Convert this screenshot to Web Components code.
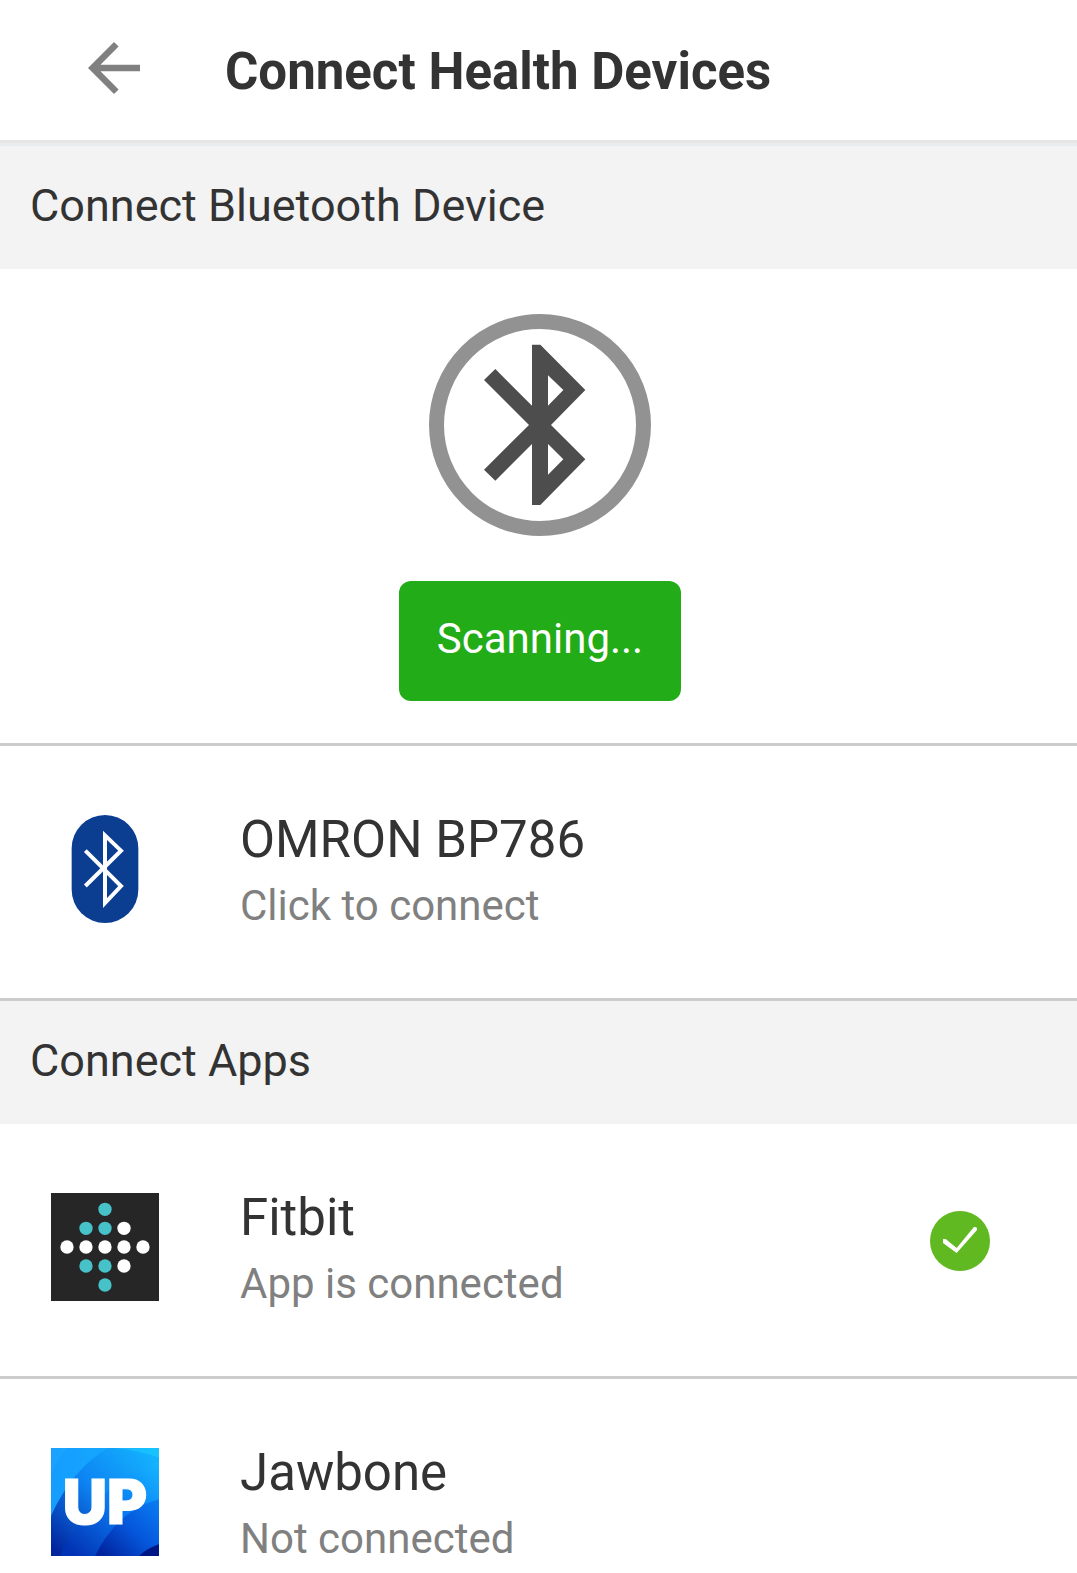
<!DOCTYPE html>
<html lang="en">
<head>
<meta charset="utf-8">
<meta name="viewport" content="width=device-width, initial-scale=1">
<title>Connect Health Devices</title>
<style>
body { margin: 0; background: #fff; color: #333; font-family: Roboto, "Noto Sans", sans-serif; }
</style>
</head>
<body>
<health-app>
  <app-header slot="header">Connect Health Devices</app-header>
  <section-heading>Connect Bluetooth Device</section-heading>
  <scan-panel>Scanning...</scan-panel>
  <device-row>
    <app-logo slot="icon" name="bluetooth"></app-logo>
    <span slot="title">OMRON BP786</span>
    <span slot="status">Click to connect</span>
  </device-row>
  <section-heading>Connect Apps</section-heading>
  <device-row>
    <app-logo slot="icon" name="fitbit"></app-logo>
    <span slot="title">Fitbit</span>
    <span slot="status">App is connected</span>
    <check-badge slot="badge"></check-badge>
  </device-row>
  <device-row>
    <app-logo slot="icon" name="up"></app-logo>
    <span slot="title">Jawbone</span>
    <span slot="status">Not connected</span>
  </device-row>
</health-app>
<script>
const define = (name, render) => customElements.define(name, class extends HTMLElement {
  connectedCallback() {
    if (!this.shadowRoot) this.attachShadow({ mode: 'open' }).innerHTML = render(this);
  }
});

define('health-app', () => `
  <style>
    :host { display: flex; flex-direction: column; height: 100vh; }
    main { flex: 1; min-height: 0; overflow-y: auto; scrollbar-width: none; }
  </style>
  <slot name="header"></slot>
  <main><slot></slot></main>`);

define('app-header', () => `
  <style>
    :host { display: block; flex: none; border-bottom: 3px solid #e8ecef; }
    header { display: flex; align-items: center; gap: 72px; height: 140px; padding: 0 75px; border-bottom: 3px solid #e6e6e6; }
    button { display: block; margin: 0 0 4px; padding: 0; border: 0; background: none; color: #808080; cursor: pointer; }
    svg { display: block; width: 78px; height: 78px; }
    h1 { margin: 4px 0 0; font-size: 51px; line-height: 60px; font-weight: 700; }
  </style>
  <header>
    <button type="button" aria-label="Back"><svg viewBox="0 0 24 24" fill="currentColor"><path d="M20 11H7.83l5.59-5.59L12 4l-8 8 8 8 1.41-1.41L7.83 13H20v-2z"/></svg></button>
    <h1><slot></slot></h1>
  </header>`);

define('section-heading', () => `
  <style>
    :host { display: block; background: #f3f3f3; }
    h2 { margin: 0; padding: 34px 30px 37px; font-size: 45px; line-height: 52px; font-weight: 400; }
  </style>
  <h2><slot></slot></h2>`);

define('scan-panel', () => `
  <style>
    :host { display: flex; flex-direction: column; align-items: center; gap: 45px; padding: 45px 0 42px 3px; border-bottom: 3px solid #ccc; }
    svg { display: block; width: 222px; height: 222px; }
    button { height: 120px; padding: 0 38px 5px; border: 0; border-radius: 12px; background: #22ac18; color: #fff; font: 400 42px/50px Roboto, sans-serif; cursor: pointer; }
  </style>
  <svg viewBox="87 42 666 666" aria-hidden="true">
    <circle cx="420" cy="375" r="310.5" fill="none" stroke="#929292" stroke-width="45"/>
    <path fill="#4d4d4d" fill-rule="evenodd" d="M396 134H421L556 270L453 375L556 478L421 615H396V432L286 542L252 509L387 375L252 240L286 207L396 317ZM444 226V317L490 270ZM444 432V524L490 478Z"/>
  </svg>
  <button type="button"><slot></slot></button>`);

define('device-row', () => `
  <style>
    :host { display: block; border-bottom: 3px solid #ccc; }
    button { display: flex; align-items: center; width: 100%; min-height: 252px; padding: 0 87px 6px 51px; border: 0; background: none; color: inherit; font: inherit; text-align: left; cursor: pointer; }
    .text { display: flex; flex-direction: column; gap: 11px; flex: 1; margin: 2px 0 0 81px; }
    .title { font-size: 51px; line-height: 60px; }
    .status { font-size: 42px; line-height: 50px; color: #808080; }
  </style>
  <button type="button">
    <slot name="icon"></slot>
    <span class="text">
      <span class="title"><slot name="title"></slot></span>
      <span class="status"><slot name="status"></slot></span>
    </span>
    <slot name="badge"></slot>
  </button>`);

define('check-badge', () => `
  <style>
    :host { display: block; margin-bottom: 12px; }
    svg { display: block; width: 60px; height: 60px; }
  </style>
  <svg viewBox="60 48 180 180" role="img" aria-label="Connected">
    <circle cx="150" cy="138" r="90" fill="#61b921"/>
    <path d="M99 132H107L140 159L191 97Q196 94 201 99V105L140 174L99 144Z" fill="#fff"/>
  </svg>`);

const dots = [
  [195, 88, 1], [138, 145, 1], [195, 145, 1], [252, 145, 0],
  [81, 201, 0], [138, 201, 0], [195, 201, 0], [252, 201, 0], [309, 201, 0],
  [138, 258, 1], [195, 258, 1], [252, 258, 0], [195, 315, 1]
];

const logos = {
  bluetooth: `<svg viewBox="3 44 324 324">
    <rect x="65" y="44" width="200" height="324" rx="100" fill="#0b3d91"/>
    <path d="M106 151L213 257L165 308V105L213 151L106 257" fill="none" stroke="#fff" stroke-width="12" stroke-miterlimit="8"/>
  </svg>`,
  fitbit: `<svg viewBox="33 39 324 324">
    <rect x="33" y="39" width="324" height="324" fill="#262626"/>
    ${dots.map(([x, y, teal]) => `<circle cx="${x}" cy="${y}" r="20" fill="${teal ? '#46c2c8' : '#fff'}"/>`).join('')}
  </svg>`,
  up: `<svg viewBox="33 39 324 324">
    <defs>
      <linearGradient id="sky" x1="0" y1="0" x2="1" y2="0"><stop offset="0" stop-color="#1ba0ff"/><stop offset="1" stop-color="#17c4ff"/></linearGradient>
      <linearGradient id="a" gradientUnits="userSpaceOnUse" x1="340" y1="50" x2="50" y2="350"><stop offset="0" stop-color="#14b4ff"/><stop offset=".5" stop-color="#0d83f2"/><stop offset="1" stop-color="#02259e"/></linearGradient>
      <linearGradient id="b" gradientUnits="userSpaceOnUse" x1="350" y1="85" x2="110" y2="363"><stop offset="0" stop-color="#15b4ff"/><stop offset=".45" stop-color="#0b7df4"/><stop offset="1" stop-color="#0233b4"/></linearGradient>
      <linearGradient id="c" gradientUnits="userSpaceOnUse" x1="350" y1="195" x2="190" y2="363"><stop offset="0" stop-color="#0a7cf2"/><stop offset=".5" stop-color="#0556da"/><stop offset="1" stop-color="#01239e"/></linearGradient>
    </defs>
    <rect x="33" y="39" width="324" height="324" fill="url(#sky)"/>
    <path d="M33 120Q55 65 80 39H225Q300 48 357 68V363H33Z" fill="#1098fc" opacity=".45"/>
    <path d="M33 243C60 180 120 85 205 39H225Q300 48 357 68V363H33Z" fill="url(#a)"/>
    <path d="M60 363C100 285 190 130 357 78V363Z" fill="url(#b)"/>
    <path d="M165 363C205 280 270 215 357 193V363Z" fill="url(#c)"/>
    <path d="M297 363Q325 338 357 328V363Z" fill="#001684"/>
    <text x="195" y="266" text-anchor="middle" font-family="Inter, sans-serif" font-weight="900" font-size="184" fill="#fff" stroke="#fff" stroke-width="3">UP</text>
  </svg>`
};

define('app-logo', el => `
  <style>
    :host { display: block; flex: none; }
    svg { display: block; width: 108px; height: 108px; }
  </style>
  ${logos[el.getAttribute('name')]}`);
</script>
</body>
</html>
